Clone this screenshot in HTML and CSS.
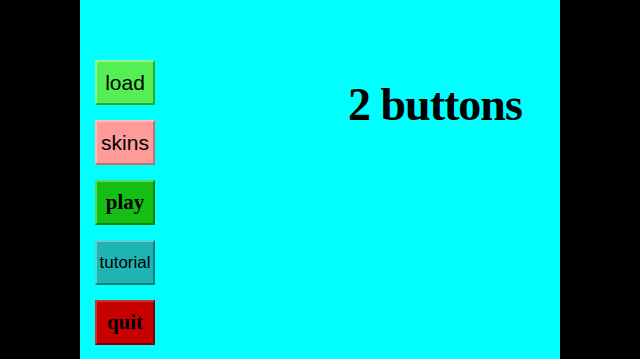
FILE: index.html
```html
<!DOCTYPE html>
<html>
<head>
<meta charset="utf-8">
<title>2 buttons</title>
<link rel="stylesheet" href="styles.css">
</head>
<body>
<div class="stage">
  <div class="menu">
    <div class="btn btn-load">load</div>
    <div class="btn btn-skins">skins</div>
    <div class="btn btn-play">play</div>
    <div class="btn btn-tutorial">tutorial</div>
    <div class="btn btn-quit">quit</div>
  </div>
  <div class="title">2 buttons</div>
</div>
</body>
</html>
```
FILE: styles.css
```css
html, body {
  margin: 0;
  padding: 0;
  background: #000;
  height: 100%;
  overflow: hidden;
}
.stage {
  width: 480px;
  height: 359px;
  margin: 0 auto;
  background: #00ffff;
  display: flex;
  flex-direction: row;
  align-items: flex-start;
}
.menu {
  display: flex;
  flex-direction: column;
  gap: 15px;
  padding: 60px 0 0 15px;
}
.btn {
  box-sizing: border-box;
  width: 60px;
  height: 45px;
  display: flex;
  align-items: center;
  justify-content: center;
  border: 2px solid;
  color: #000;
  font-family: "Liberation Sans", Arial, sans-serif;
  font-size: 21px;
}
.btn-load {
  background: #55ee55;
  border-color: #8cf58c #2fa82f #2fa82f #8cf58c;
}
.btn-skins {
  background: #ff9a9a;
  border-color: #ffbcbc #c07070 #c07070 #ffbcbc;
}
.btn-play {
  background: #14be14;
  border-color: #5ad65a #0c820c #0c820c #5ad65a;
  font-family: "Liberation Serif", "Times New Roman", serif;
  font-weight: bold;
}
.btn-tutorial {
  background: #1eb4b4;
  border-color: #5fcfcf #137c7c #137c7c #5fcfcf;
  font-size: 17px;
}
.btn-quit {
  background: #c80000;
  border-color: #d03030 #800000 #800000 #d03030;
  font-family: "Liberation Serif", "Times New Roman", serif;
  font-weight: bold;
}
.title {
  margin-left: 193px;
  padding-top: 78px;
  font-family: "Liberation Serif", "Times New Roman", serif;
  font-weight: bold;
  font-size: 46px;
  letter-spacing: -1px;
  color: #000;
  white-space: nowrap;
}
```
